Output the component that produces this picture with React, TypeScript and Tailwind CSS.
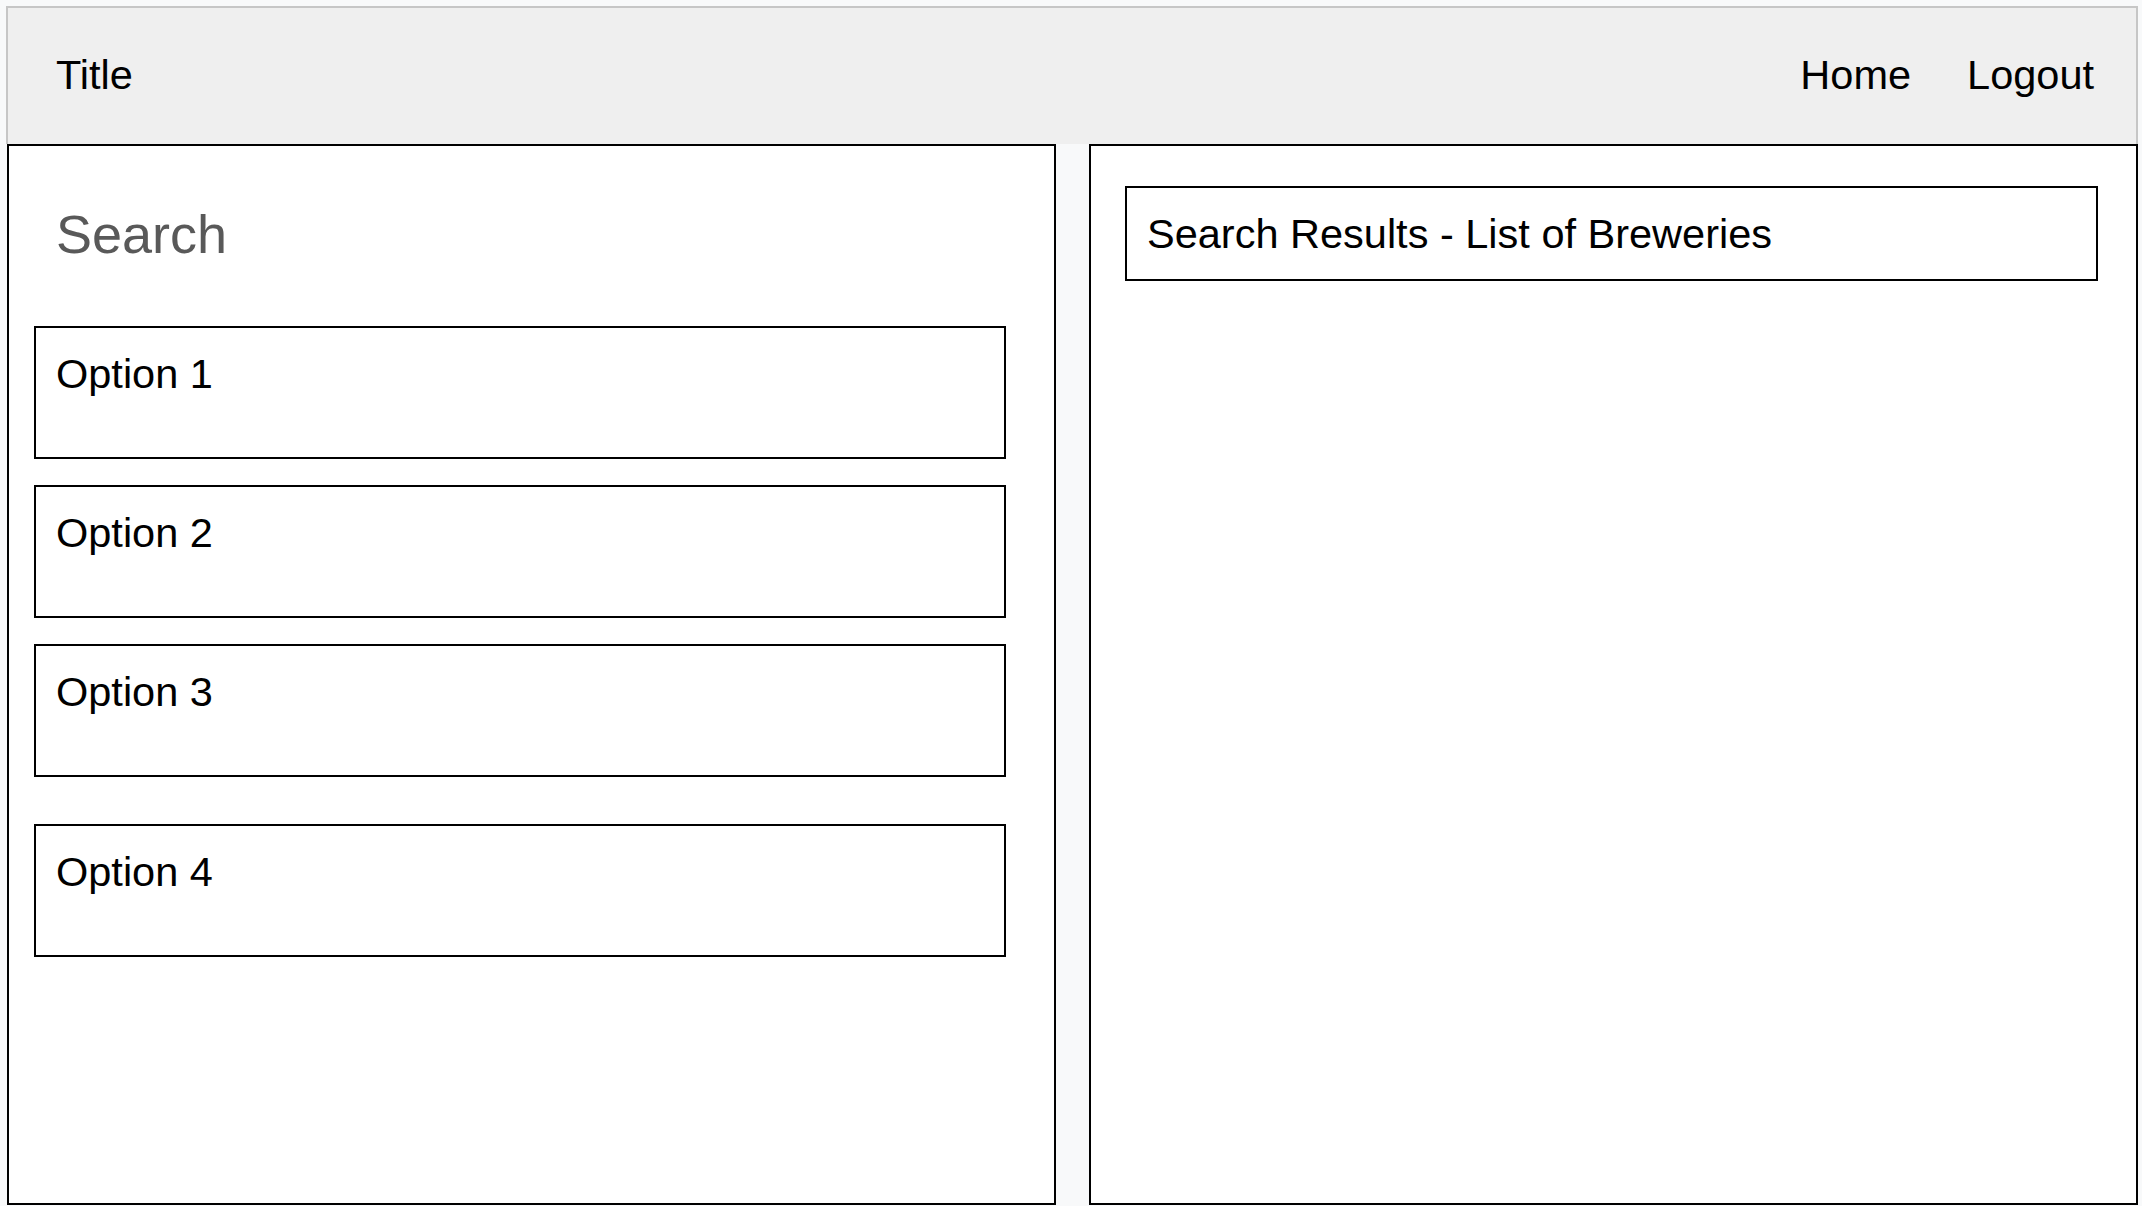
const options = ["Option 1", "Option 2", "Option 3", "Option 4"];

export default function App() {
    return (
        <div
            className="min-h-screen bg-[#f8f9fa] pl-[6px] pt-[6px] text-black"
            style={{ fontFamily: '"Liberation Sans", Arial, sans-serif' }}
        >
            <header className="w-[2132px] h-[138px] border-2 border-b-0 border-[#c6c6c6] bg-[#efefef] flex items-start justify-between pt-[43px] pl-[48px] pr-[42px]">
                <span className="text-[41.5px] leading-[48px]">Title</span>
                <nav className="flex gap-[56px] text-[41.5px] leading-[48px]">
                    <span>Home</span>
                    <span>Logout</span>
                </nav>
            </header>
            <div className="flex gap-[33px] pl-px">
                <aside className="w-[1049px] h-[1061px] border-2 border-black bg-white pl-[25px]">
                    <h1 className="pt-[57px] pl-[22px] text-[54px] leading-[62px] text-[#595959]">Search</h1>
                    <div className="mt-[61px] flex flex-col">
                        {options.map((o, i) => (
                            <div
                                key={o}
                                className={`w-[972px] h-[133px] border-2 border-black pt-[22px] pl-[20px] text-[41.5px] leading-[48px] ${
                                    i === 0 ? "" : i === 3 ? "mt-[47px]" : "mt-[26px]"
                                }`}
                            >
                                {o}
                            </div>
                        ))}
                    </div>
                </aside>
                <section className="w-[1049px] h-[1061px] border-2 border-black bg-white pt-[40px] pl-[34px]">
                    <div className="w-[973px] h-[95px] border-2 border-black pt-[22px] pl-[20px] text-[41.5px] leading-[48px]">
                        Search Results - List of Breweries
                    </div>
                </section>
            </div>
        </div>
    );
}
